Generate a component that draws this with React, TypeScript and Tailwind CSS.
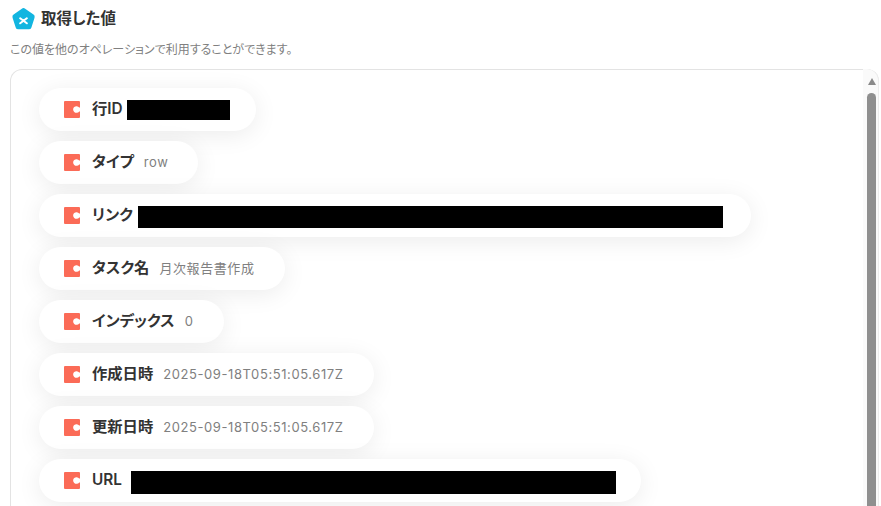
import React from "react";

interface Row {
  label: string;
  value?: string;
  masked?: number;
  maskHeight?: number;
  maskTop?: number;
  gap?: number;
  width: number;
}

const rows: Row[] = [
  { label: "行ID", masked: 103, maskHeight: 20, maskTop: 1, gap: 4, width: 217 },
  { label: "タイプ", value: "row", width: 159 },
  { label: "リンク", masked: 585, maskHeight: 22, maskTop: 2, gap: 5, width: 712 },
  { label: "タスク名", value: "月次報告書作成", width: 246 },
  { label: "インデックス", value: "0", width: 185 },
  { label: "作成日時", value: "2025-09-18T05:51:05.617Z", width: 335 },
  { label: "更新日時", value: "2025-09-18T05:51:05.617Z", width: 335 },
  { label: "URL", masked: 485, maskHeight: 23, maskTop: 4, gap: 9, width: 602 },
];

const font = { fontFamily: 'Inter, "Noto Sans CJK JP", sans-serif' };

const PartIcon = () => (
  <svg width="16" height="17" viewBox="0 0 16 17" className="shrink-0">
    <path
      d="M1 0H15a1 1 0 0 1 1 1V6.500H15.200A3.360 3.360 0 1 0 15.200 10.500H16V16a1 1 0 0 1-1 1H1a1 1 0 0 1-1-1V1a1 1 0 0 1 1-1Z"
      fill="#fb6b57"
    />
  </svg>
);

const Logo = () => (
  <svg width="25" height="24" viewBox="0 0 24 23" className="shrink-0">
    <path
      d="M10.400 1.600a2.800 2.800 0 0 1 3.200 0l8 5.600a2.600 2.600 0 0 1 1 3l-3 9.400a2.600 2.600 0 0 1-2.500 1.800H7a2.600 2.600 0 0 1-2.500-1.800l-3-9.400a2.600 2.600 0 0 1 1-3Z"
      fill="#12b5e0"
    />
    <path d="M8.800 10.800 15.200 15.600M15.200 10.800 8.800 15.600" stroke="#fff" strokeWidth="2" strokeLinecap="round" />
  </svg>
);

const ValueRow = ({ row }: { row: Row }) => (
  <div
    className="flex h-[43px] shrink-0 items-center rounded-full bg-white pl-[25px] shadow-[0_4px_24px_rgba(0,0,0,0.08)]"
    style={{ width: row.width }}
  >
    <PartIcon />
    <span className="ml-[12px] text-[15.300px] font-semibold whitespace-nowrap text-[#333333] [font-feature-settings:'palt']">
      {row.label}
    </span>
    {row.masked ? (
      <span
        className="bg-black"
        style={{ width: row.masked, height: row.maskHeight, marginLeft: row.gap, marginTop: row.maskTop }}
      />
    ) : (
      <span className="ml-[10px] text-[13px] tracking-[0.045em] whitespace-nowrap text-[#808080]">{row.value}</span>
    )}
  </div>
);

export default function App() {
  return (
    <div className="h-[506px] w-[881px] overflow-hidden bg-white" style={font}>
      <div className="flex items-center gap-[5px] pt-[7px] pl-[11px]">
        <Logo />
        <h2 className="text-[15.500px] font-semibold text-[#333333] [font-feature-settings:'palt']">取得した値</h2>
      </div>
      <p className="mt-[11px] ml-[10px] text-[12px] leading-[16px] text-[#808080] [font-feature-settings:'palt']">
        この値を他のオペレーションで利用することができます。
      </p>
      <div className="relative mt-[11px] ml-[10px] h-[460px] w-[869px] rounded-t-[12px] border border-[#e3e3e3] border-b-0">
        <div className="flex flex-col gap-[10px] pt-[18px] pl-[28px]">
          {rows.map((row) => (
            <ValueRow key={row.label} row={row} />
          ))}
        </div>
        <div className="absolute -top-px -right-px h-[460px] w-[16px] rounded-tr-[12px] border-r border-[#ececec] bg-[#fafafa]" />
        <div className="absolute top-[8px] right-[2px] flex w-[9px] flex-col items-center">
          <div className="h-0 w-0 border-x-[4.500px] border-b-[7px] border-x-transparent border-b-[#8a8a8a]" />
          <div className="mt-[8px] h-[420px] w-[9px] rounded-t-full bg-[#8f8f8f]" />
        </div>
      </div>
    </div>
  );
}
